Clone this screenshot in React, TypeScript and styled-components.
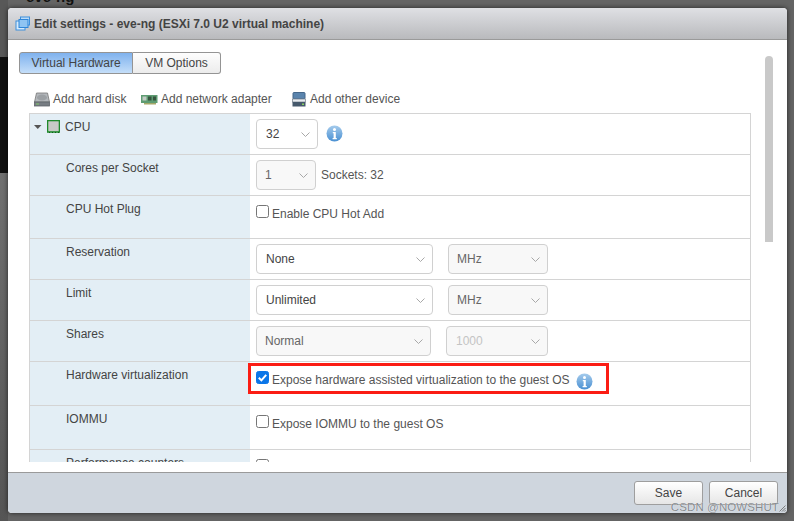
import * as React from 'react'
import styled, { createGlobalStyle } from 'styled-components'

const GlobalStyle = createGlobalStyle`
  html, body {
    margin: 0;
    padding: 0;
    background: #646464;
    font-family: "Liberation Sans", Arial, sans-serif;
  }
`

const Page = styled.div`
  position: relative;
  width: 794px;
  height: 521px;
  overflow: hidden;
  background: #646464;
`

const SideStrip = styled.div`
  position: absolute;
  left: 0;
  top: 0;
  bottom: 0;
  width: 8px;
  background: linear-gradient(
    to bottom,
    #585858 0,
    #585858 57px,
    #101010 57px,
    #101010 173px,
    #707070 173px,
    #555 521px
  );
`

const BackdropTitle = styled.div`
  height: 11px;
  margin-top: -3px;
  overflow: hidden;
  padding-left: 26px;
  font-size: 15px;
  font-weight: 700;
  line-height: 0;
  color: #111;
`

const Dialog = styled.div`
  position: relative;
  display: flex;
  flex-direction: column;
  width: 779px;
  height: 505px;
  margin-left: 8px;
  border-radius: 4px;
  background: #fff;
  box-shadow: 0 0 5px rgba(0, 0, 0, 0.65);
  overflow: hidden;
`

const TitleBar = styled.div`
  display: flex;
  align-items: center;
  gap: 3px;
  box-sizing: border-box;
  height: 32px;
  padding-left: 7px;
  border-bottom: 1px solid #9a9a9a;
  background: linear-gradient(to bottom, #dfe0e4, #b9babd);
  font-size: 12px;
  font-weight: 700;
  color: #444;
  white-space: nowrap;
`

const Body = styled.div`
  display: flex;
  height: 432px;
  box-sizing: border-box;
  padding: 12px 14px 10px 11px;
`

const Main = styled.div`
  display: flex;
  flex-direction: column;
  width: 732px;
`

const ScrollThumb = styled.div`
  width: 8px;
  height: 186px;
  margin: 4px 0 0 14px;
  border-radius: 4px 4px 0 0;
  background: #c9c9c9;
`

const Tabs = styled.div`
  display: flex;
  height: 22px;
`

const Tab = styled.div<{ $active?: boolean; $width: number }>`
  display: flex;
  align-items: center;
  justify-content: center;
  box-sizing: border-box;
  width: ${p => p.$width}px;
  border: 1px solid #949494;
  border-left-width: ${p => (p.$active ? 1 : 0)}px;
  border-radius: ${p => (p.$active ? '3px 0 0 3px' : '0 3px 3px 0')};
  background: ${p =>
    p.$active
      ? 'linear-gradient(to bottom, #7fb2ee, #c4def9)'
      : 'linear-gradient(to bottom, #fdfdfd, #ececec)'};
  font-size: 12px;
  color: #444;
`

const AddRow = styled.div`
  display: flex;
  align-items: center;
  height: 20px;
  margin: 15px 0 4px 15px;
  font-size: 12px;
  color: #555;
`

const AddItem = styled.div<{ $width: number }>`
  display: flex;
  align-items: center;
  gap: 3px;
  width: ${p => p.$width}px;
`

const TableClip = styled.div`
  flex: 1;
  margin-left: 10px;
  overflow: hidden;
  border-top: 1px solid #d4d4d4;
`

const Row = styled.div<{ $height: number }>`
  display: flex;
  box-sizing: border-box;
  height: ${p => p.$height}px;
  border-bottom: 1px solid #d4d4d4;
  border-left: 1px solid #d4d4d4;
  border-right: 1px solid #d4d4d4;
`

const LabelCell = styled.div`
  display: flex;
  align-items: flex-start;
  box-sizing: border-box;
  width: 220px;
  padding: 6px 0 0 36px;
  background: #e3eef5;
  font-size: 12px;
  line-height: 14px;
  color: #444;
`

const CpuLabel = styled(LabelCell)`
  padding-left: 4px;
  gap: 5px;
`

const ValueCell = styled.div`
  position: relative;
  display: flex;
  align-items: flex-start;
  flex: 1;
  padding: 5px 0 0 6px;
  font-size: 12px;
  color: #555;
`

const Select = styled.div<{ $width: number; $disabled?: boolean; $muted?: boolean; $gap?: number }>`
  display: flex;
  align-items: center;
  justify-content: space-between;
  box-sizing: border-box;
  width: ${p => p.$width}px;
  height: 30px;
  margin-right: ${p => p.$gap ?? 0}px;
  padding: 0 6px 0 ${p => (p.$disabled && !p.$muted ? 8 : 9)}px;
  border: 1px solid #d0d0d0;
  border-radius: 4px;
  background: ${p => (p.$disabled ? '#f8f8f8' : '#fff')};
  font-size: 12px;
  color: ${p => (p.$muted ? '#c4c4c4' : p.$disabled ? '#666' : '#444')};
`

const InlineText = styled.span`
  margin-left: 5px;
  line-height: 30px;
`

const Check = styled.span<{ $checked?: boolean }>`
  display: inline-flex;
  align-items: center;
  justify-content: center;
  box-sizing: border-box;
  flex: none;
  width: 13px;
  height: 13px;
  margin-top: 4px;
  border: 1px solid ${p => (p.$checked ? '#0b76e8' : '#767676')};
  border-radius: 2.5px;
  background: ${p => (p.$checked ? '#0b76e8' : '#fff')};
`

const CheckLabel = styled.span`
  margin-left: 3px;
  margin-top: 6px;
  line-height: 14px;
`

const InfoWrap = styled.span<{ $left: number; $top: number }>`
  display: inline-flex;
  margin: ${p => p.$top}px 0 0 ${p => p.$left}px;
`

const Highlight = styled.div`
  position: absolute;
  left: -2px;
  top: 1px;
  width: 361px;
  height: 31px;
  box-sizing: border-box;
  border: 3px solid #fb1d14;
  pointer-events: none;
`

const Footer = styled.div`
  display: flex;
  justify-content: flex-end;
  gap: 6px;
  box-sizing: border-box;
  height: 41px;
  padding: 8px 9px 0 0;
  border-top: 1px solid #9a9a9a;
  background: #cfd6de;
`

const FooterButton = styled.button`
  box-sizing: border-box;
  width: 69px;
  height: 24px;
  padding: 0;
  border: 1px solid #9e9e9e;
  border-radius: 3px;
  background: linear-gradient(to bottom, #fff, #e6e6e6);
  font-family: inherit;
  font-size: 12px;
  color: #444;
`

const ResizeGrip = styled.svg`
  position: absolute;
  right: 1px;
  bottom: 1px;
`

const Watermark = styled.div`
  position: absolute;
  right: 8px;
  bottom: 0;
  font-size: 11.5px;
  letter-spacing: 0.1px;
  color: rgba(120, 125, 130, 0.9);
  text-shadow: 0 0 1px #fff;
`

const Chevron = () => (
  <svg width="11" height="7" viewBox="0 0 11 7" fill="none">
    <path d="M1.5 1.5l4 4 4-4" stroke="#a8a8a8" strokeWidth="1" />
  </svg>
)

const InfoIcon = () => (
  <svg width="17" height="17" viewBox="0 0 17 17">
    <defs>
      <linearGradient id="infoFill" x1="0" y1="0" x2="0" y2="1">
        <stop offset="0" stopColor="#a5cbec" />
        <stop offset="1" stopColor="#4a90d2" />
      </linearGradient>
    </defs>
    <circle cx="8.5" cy="8.5" r="8" fill="url(#infoFill)" />
    <circle cx="8.5" cy="4.4" r="1.5" fill="#fff" />
    <path d="M6.8 7h3v6h1v1.2H6.6V13h1V8.2h-.8z" fill="#fff" />
  </svg>
)

const DialogIcon = () => (
  <svg width="16" height="16" viewBox="0 0 16 16">
    <rect x="5.5" y="1" width="9" height="8" fill="#bcdcf8" stroke="#3d8fdc" />
    <rect x="1" y="5" width="9" height="9" fill="#d6eafb" stroke="#3d8fdc" />
    <rect x="4" y="3.5" width="9" height="8" fill="#8fc4f2" stroke="#2f86d8" />
  </svg>
)

const DiskIcon = () => (
  <svg width="16" height="15" viewBox="0 0 16 15">
    <path d="M2.5 1h11l2 9H.5z" fill="#b4b8bc" stroke="#777" strokeWidth="0.8" />
    <ellipse cx="8" cy="5.5" rx="5" ry="3" fill="#9ca0a4" />
    <rect x="0.5" y="10" width="15" height="4" fill="#777d83" stroke="#5d6369" strokeWidth="0.8" />
    <rect x="2" y="11.5" width="3" height="1" fill="#7fc66a" />
  </svg>
)

const NetworkIcon = () => (
  <svg width="17" height="11" viewBox="0 0 17 11">
    <rect x="0" y="1" width="16.5" height="8" fill="#5e9c72" />
    <rect x="1.5" y="2.5" width="4" height="4" fill="#c1cbc4" />
    <rect x="7" y="2.5" width="3.5" height="4" fill="#37553f" />
    <rect x="12" y="2.5" width="3" height="4" fill="#37553f" />
    <rect x="3" y="9" width="12" height="1.5" fill="#a5a868" />
  </svg>
)

const DeviceIcon = () => (
  <svg width="15" height="15" viewBox="0 0 15 15">
    <rect x="1" y="0.5" width="12" height="6.5" rx="1" fill="#5a84ad" stroke="#45678a" />
    <rect x="0.5" y="7" width="13" height="3" fill="#e8ecf0" stroke="#6f7c88" strokeWidth="0.7" />
    <rect x="0.5" y="10" width="13" height="4.5" fill="#46596c" />
    <rect x="10" y="11.5" width="2" height="1.5" fill="#86d060" />
  </svg>
)

const CpuIcon = () => (
  <svg width="13" height="13" viewBox="0 0 13 13">
    <rect x="0.5" y="0.5" width="12" height="11.5" fill="#c8cac6" stroke="#1f8a2c" strokeWidth="1.6" />
    <path d="M2 12.5h1M5 12.5h1M8 12.5h1M11 12.5h1" stroke="#0d5f18" strokeWidth="1" />
  </svg>
)

const Caret = () => (
  <svg width="8" height="14" viewBox="0 0 8 14">
    <path d="M0 5h7.5L3.75 9z" fill="#555" />
  </svg>
)

const CheckMark = () => (
  <svg width="11" height="11" viewBox="0 0 11 11" fill="none">
    <path d="M1.8 5.8l2.6 2.6 4.8-5.6" stroke="#fff" strokeWidth="2" />
  </svg>
)

const SelectBox = ({
  value,
  width,
  disabled,
  muted,
  gap,
}: {
  value: string
  width: number
  disabled?: boolean
  muted?: boolean
  gap?: number
}) => (
  <Select $width={width} $disabled={disabled} $muted={muted} $gap={gap}>
    <span>{value}</span>
    <Chevron />
  </Select>
)

const CheckRow = ({ checked, text }: { checked?: boolean; text: string }) => (
  <>
    <Check $checked={checked}>{checked && <CheckMark />}</Check>
    <CheckLabel>{text}</CheckLabel>
  </>
)

export default function App() {
  return (
    <Page>
      <GlobalStyle />
      <SideStrip />
      <BackdropTitle>eve-ng</BackdropTitle>
      <Dialog>
        <TitleBar>
          <DialogIcon />
          Edit settings - eve-ng (ESXi 7.0 U2 virtual machine)
        </TitleBar>
        <Body>
          <Main>
            <Tabs>
              <Tab $active $width={114}>Virtual Hardware</Tab>
              <Tab $width={88}>VM Options</Tab>
            </Tabs>
            <AddRow>
              <AddItem $width={107}><DiskIcon />Add hard disk</AddItem>
              <AddItem $width={151}><NetworkIcon />Add network adapter</AddItem>
              <AddItem $width={120}><DeviceIcon />Add other device</AddItem>
            </AddRow>
            <TableClip>
              <Row $height={41}>
                <CpuLabel><Caret /><CpuIcon />CPU</CpuLabel>
                <ValueCell>
                  <SelectBox value="32" width={62} />
                  <InfoWrap $left={8} $top={6}><InfoIcon /></InfoWrap>
                </ValueCell>
              </Row>
              <Row $height={41}>
                <LabelCell>Cores per Socket</LabelCell>
                <ValueCell>
                  <SelectBox value="1" width={60} disabled />
                  <InlineText>Sockets: 32</InlineText>
                </ValueCell>
              </Row>
              <Row $height={43}>
                <LabelCell>CPU Hot Plug</LabelCell>
                <ValueCell><CheckRow text="Enable CPU Hot Add" /></ValueCell>
              </Row>
              <Row $height={41}>
                <LabelCell>Reservation</LabelCell>
                <ValueCell>
                  <SelectBox value="None" width={177} gap={15} />
                  <SelectBox value="MHz" width={100} disabled />
                </ValueCell>
              </Row>
              <Row $height={41}>
                <LabelCell>Limit</LabelCell>
                <ValueCell>
                  <SelectBox value="Unlimited" width={177} gap={15} />
                  <SelectBox value="MHz" width={100} disabled />
                </ValueCell>
              </Row>
              <Row $height={41}>
                <LabelCell>Shares</LabelCell>
                <ValueCell>
                  <SelectBox value="Normal" width={175} gap={15} disabled />
                  <SelectBox value="1000" width={102} disabled muted />
                </ValueCell>
              </Row>
              <Row $height={44}>
                <LabelCell>Hardware virtualization</LabelCell>
                <ValueCell>
                  <CheckRow checked text="Expose hardware assisted virtualization to the guest OS" />
                  <InfoWrap $left={6} $top={6}><InfoIcon /></InfoWrap>
                  <Highlight />
                </ValueCell>
              </Row>
              <Row $height={44}>
                <LabelCell>IOMMU</LabelCell>
                <ValueCell><CheckRow text="Expose IOMMU to the guest OS" /></ValueCell>
              </Row>
              <Row $height={44}>
                <LabelCell>Performance counters</LabelCell>
                <ValueCell><CheckRow text="" /></ValueCell>
              </Row>
            </TableClip>
          </Main>
          <ScrollThumb />
        </Body>
        <Footer>
          <FooterButton>Save</FooterButton>
          <FooterButton>Cancel</FooterButton>
        </Footer>
        <Watermark>CSDN @NOWSHUT</Watermark>
        <ResizeGrip width="7" height="7" viewBox="0 0 7 7">
          <path d="M6.5 0.5L0.5 6.5M6.5 3L3 6.5M6.5 5.2L5.2 6.5" stroke="#666" strokeWidth="0.8" />
        </ResizeGrip>
      </Dialog>
    </Page>
  )
}
